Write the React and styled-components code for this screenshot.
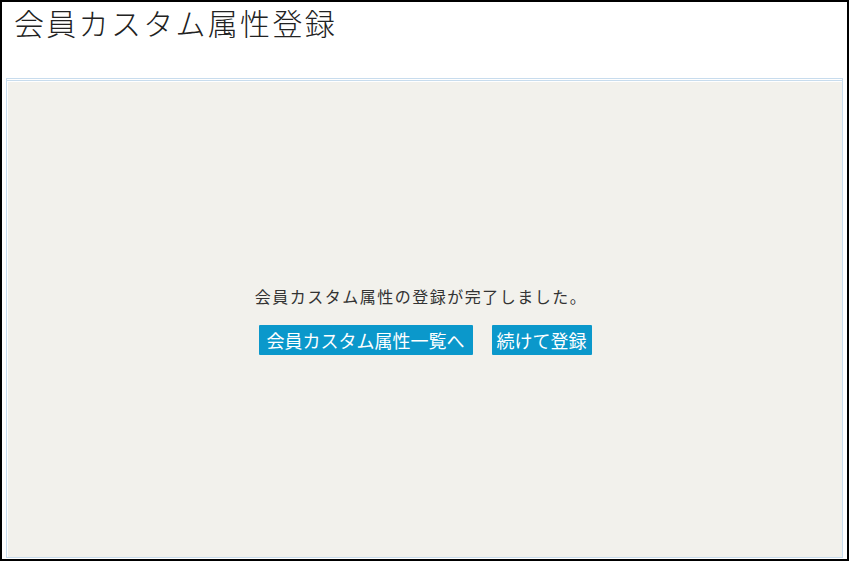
import React from 'react';
import styled, { createGlobalStyle } from 'styled-components';

const GlobalStyle = createGlobalStyle`
  html, body {
    margin: 0;
    padding: 0;
    background: #fff;
  }
  * {
    box-sizing: border-box;
  }
`;

const Frame = styled.div`
  width: 849px;
  height: 561px;
  border: 2px solid #000;
  display: flex;
  flex-direction: column;
  background: #fff;
  font-family: "Noto Sans CJK JP", "Noto Sans", sans-serif;
`;

const Header = styled.header`
  height: 76px;
  padding: 2px 0 0 12px;
`;

const Title = styled.h1`
  margin: 0;
  font-size: 30px;
  font-weight: 300;
  line-height: 36px;
  color: #222;
  letter-spacing: 2.3px;
`;

const Content = styled.div`
  flex: 1;
  margin: 0 4px 1px;
  border: 1px solid #c8dced;
  padding: 1px 0 0;
  display: flex;
  flex-direction: column;
`;

const Rule = styled.div`
  height: 1px;
  background: #c8dced;
  margin-bottom: 1px;
`;

const Panel = styled.main`
  flex: 1;
  background: #f2f1ec;
  margin: 0 0 0 1px;
  display: flex;
  flex-direction: column;
  align-items: center;
  justify-content: center;
`;

const Message = styled.p`
  margin: 0 8px 0 0;
  font-size: 16px;
  letter-spacing: 1.5px;
  color: #333;
  line-height: 24px;
`;

const Actions = styled.div`
  display: flex;
  gap: 19px;
  margin-top: 17px;
`;

const Button = styled.button`
  height: 30px;
  padding: 0 ${p => (p.$wide ? 8 : 5)}px;
  border: none;
  border-radius: 1px;
  background: #0b98cb;
  color: #fff;
  font-family: inherit;
  font-size: 18px;
  line-height: 30px;
  cursor: pointer;
`;

export default function App() {
  return (
    <>
      <GlobalStyle />
      <Frame>
        <Header>
          <Title>会員カスタム属性登録</Title>
        </Header>
        <Content>
          <Rule />
          <Panel>
            <Message>会員カスタム属性の登録が完了しました。</Message>
            <Actions>
              <Button $wide>会員カスタム属性一覧へ</Button>
              <Button>続けて登録</Button>
            </Actions>
          </Panel>
        </Content>
      </Frame>
    </>
  );
}
